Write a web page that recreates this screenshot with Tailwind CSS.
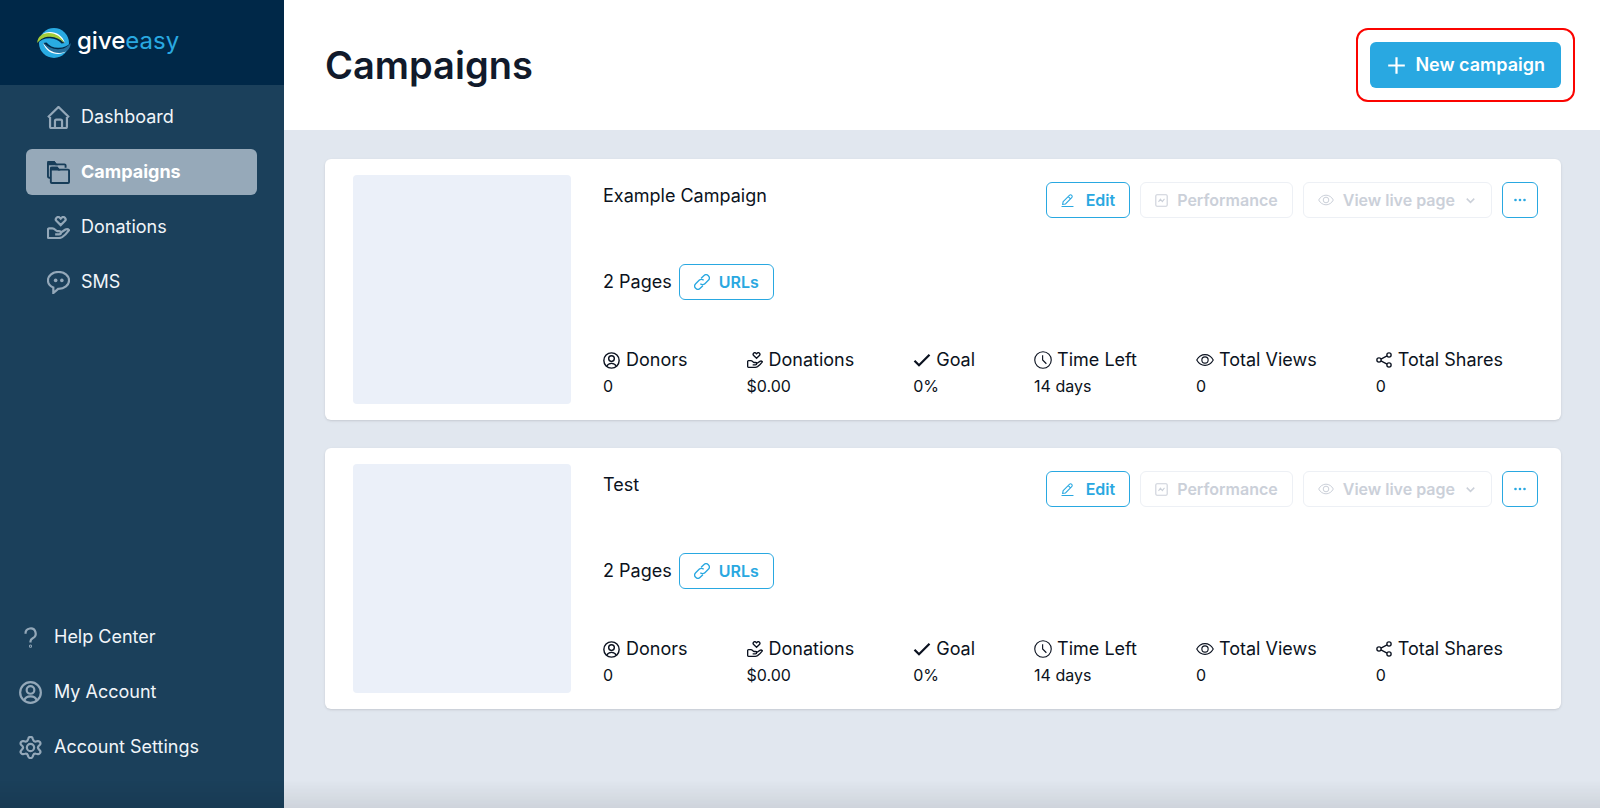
<!DOCTYPE html>
<html lang="en">
<head>
  <meta charset="UTF-8">
  <meta name="viewport" content="width=device-width, initial-scale=1">
  <title>Campaigns - GiveEasy</title>
  <script src="https://cdn.jsdelivr.net/npm/@tailwindcss/browser@4"></script>
</head>
<body class="flex min-h-screen bg-[#e1e7ef] font-['Inter',sans-serif] text-lg leading-6 text-[#0b1220]">

  <!-- Icons -->
  <svg class="hidden">
    <symbol id="home" viewBox="0 0 24 24"><path d="M3.2 11.5V21.6a1.4 1.4 0 0 0 1.4 1.4h14.8a1.4 1.4 0 0 0 1.4-1.4V11.5M1 11.8 12 1l11 10.8M8.3 22.8v-7a1.5 1.5 0 0 1 1.5-1.5h4.4a1.5 1.5 0 0 1 1.5 1.5v7"/></symbol>
    <symbol id="folders" viewBox="0 0 24 24"><path d="M4 17.5H2.2A1.2 1.2 0 0 1 1 16.3V2.2A1.2 1.2 0 0 1 2.2 1h5l2 2.5h9a1.2 1.2 0 0 1 1.2 1.2V7M4 22V8a1 1 0 0 1 1-1h5.500l1.500 2h10a1 1 0 0 1 1 1v12a1 1 0 0 1-1 1H5a1 1 0 0 1-1-1z"/><path fill="currentColor" d="M1.500 1h5.700l2 2.500H1.500zM4.500 7h6l1.500 2H4.500z"/></symbol>
    <symbol id="hand" viewBox="0 0 24 24"><path d="M14.300 9.500 10 5.300a2.400 2.400 0 0 1 3.400-3.500l.9.900.9-.9a2.400 2.400 0 0 1 3.400 3.500zM1 14.200v7.600a1.200 1.200 0 0 0 1.200 1.200h10.300c1.200 0 2.300-.4 3.300-1 2.800-1.800 5-4.300 7.200-7.300-1-1.200-2.500-1.300-3.700-.6l-4.700 3.100c-.3-1-1-1.500-2-1.500h-2c-1.500 0-2.300-2.700-5.100-2.700H2.200A1.200 1.200 0 0 0 1 14.200zM14.600 17.200c0 1.200-.9 2-2 2H8.500"/></symbol>
    <symbol id="chat" viewBox="0 0 24 24"><path d="M12 1C5.900 1 1 4.800 1 9.800c0 3.400 2.300 6 5.600 7.400V23l5-4.400H12c6.100 0 11-3.800 11-8.800S18.100 1 12 1z"/><g fill="#94a8b9" stroke="none"><circle cx="9" cy="9.800" r="1.900"/><circle cx="15.500" cy="9.800" r="1.900"/></g></symbol>
    <symbol id="question" viewBox="0 0 24 24"><path d="M6.800 8a5.300 5.300 0 1 1 7.500 4.700c-1.500.8-2.300 1.700-2.300 3.300v1.200"/><circle cx="12" cy="21" r=".5"/></symbol>
    <symbol id="user" viewBox="0 0 24 24"><circle cx="12" cy="12" r="10.800"/><circle cx="12" cy="9.300" r="4"/><path d="M5.300 20.300c1-2.800 3.700-4.300 6.700-4.300s5.700 1.500 6.700 4.300"/></symbol>
    <symbol id="cog" viewBox="0 0 24 24"><circle cx="12" cy="12" r="3.800"/><path d="m14.300 2.600.5 1.500a2.400 2.400 0 0 0 2.900 1.600l1.500-.3a2.400 2.400 0 0 1 2.400 4l-1.100 1.100a2.400 2.400 0 0 0 0 3.200l1.100 1.100a2.400 2.400 0 0 1-2.400 4l-1.500-.3a2.400 2.400 0 0 0-2.900 1.600l-.5 1.300a2.400 2.400 0 0 1-4.600 0l-.5-1.300a2.400 2.400 0 0 0-2.900-1.600l-1.500.3a2.400 2.400 0 0 1-2.400-4l1.100-1.200a2.400 2.400 0 0 0 0-3.200L2.400 9.400a2.400 2.400 0 0 1 2.400-4l1.500.3a2.400 2.400 0 0 0 2.900-1.600l.5-1.500a2.400 2.400 0 0 1 4.600 0z"/></symbol>
    <symbol id="plus" viewBox="0 0 24 24"><path d="M12 2.500v19M2.500 12h19"/></symbol>
    <symbol id="pencil" viewBox="0 0 24 24"><path d="M1 23h22M4 14 15.500 2.500a3 3 0 0 1 4.300 4.300L8.300 18.300 3 19zM13.500 5l4 4"/></symbol>
    <symbol id="chart" viewBox="0 0 24 24"><rect x="1.500" y="1.500" width="21" height="21" rx="2"/><path d="m6.500 14.500 3.500-5 3.500 4.500L17.500 9"/></symbol>
    <symbol id="eye" viewBox="0 0 24 24"><path d="M1 12c2.500-4.500 6.300-7.200 11-7.200S20.500 7.500 23 12c-2.500 4.500-6.300 7.200-11 7.200S3.500 16.500 1 12z"/><circle cx="12" cy="12" r="4.200"/></symbol>
    <symbol id="down" viewBox="0 0 24 24"><path d="m2 7 10 10L22 7"/></symbol>
    <symbol id="dots" viewBox="0 0 24 24"><g fill="currentColor" stroke="none"><circle cx="3" cy="12" r="2.600"/><circle cx="12" cy="12" r="2.600"/><circle cx="21" cy="12" r="2.600"/></g></symbol>
    <symbol id="link" viewBox="0 0 24 24"><path d="M9.500 14.500a4.800 4.800 0 0 0 6.800 0l5.200-5.200a4.800 4.800 0 0 0-6.800-6.800l-4 4M14.500 9.500a4.800 4.800 0 0 0-6.800 0l-5.200 5.200a4.800 4.800 0 0 0 6.800 6.800l4-4"/></symbol>
    <symbol id="check" viewBox="0 0 24 24"><path d="m2 13 6 6L22 5"/></symbol>
    <symbol id="clock" viewBox="0 0 24 24"><circle cx="12" cy="12" r="11"/><path d="M11.500 5.500V12l5 5"/></symbol>
    <symbol id="share" viewBox="0 0 24 24"><circle cx="4.500" cy="12" r="3.200"/><circle cx="19.500" cy="4.500" r="3.200"/><circle cx="19.500" cy="19.500" r="3.200"/><path d="m7.400 10.600 9.200-4.700M7.400 13.400l9.200 4.700"/></symbol>
  </svg>

  <!-- Sidebar -->
  <aside class="flex w-[284px] shrink-0 flex-col bg-[#1b405b] text-slate-100">
    <a href="#" class="flex h-[85px] items-center gap-[5px] bg-[#002848] pl-9" aria-label="giveeasy">
      <svg class="size-9" viewBox="0 0 36 36" fill="none">
        <circle cx="18" cy="18" r="15" fill="#29abe2"/>
        <g>
          <path d="M1 18.500C5 14.500 9 13 14 13.200c5 .2 8.500 1.800 11.500 5.300l3.500-.5C25 13 20 9 13 9 7 9 2 12 1 18.500z" fill="#002848"/>
          <path d="M6 9.500C13 4.500 26 7 29 18.500 25 12 19 9 13 9z" fill="#fff"/>
          <path d="M1.200 18C1.500 11.500 6.500 7.800 13 8c7 .3 12.500 4 15 10-4-4-8.500-6-13.500-6.200C9 11.600 5 13.500 1.200 18z" fill="#a4cd39"/>
        </g>
        <g transform="rotate(180 18 18)">
          <path d="M1 18.500C5 14.500 9 13 14 13.200c5 .2 8.500 1.800 11.500 5.300l3.500-.5C25 13 20 9 13 9 7 9 2 12 1 18.500z" fill="#002848"/>
          <path d="M6 9.500C13 4.500 26 7 29 18.500 25 12 19 9 13 9z" fill="#fff"/>
          <path d="M1.200 18C1.500 11.500 6.500 7.800 13 8c7 .3 12.500 4 15 10-4-4-8.500-6-13.500-6.200C9 11.600 5 13.500 1.200 18z" fill="#256f9c"/>
        </g>
      </svg>
      <span class="pb-1 text-2xl leading-8 font-medium text-white">give<span class="font-normal text-[#29a9e1]">easy</span></span>
    </a>
    <nav class="flex flex-col gap-[9px] pt-[9px] pr-[27px] pl-[26px]">
      <a href="#" class="flex h-[46px] items-center gap-[11px] rounded-md px-[21px]">
        <svg class="size-[23px] fill-none stroke-[#94a8b9] stroke-[2.3]"><use href="#home"/></svg>Dashboard
      </a>
      <a href="#" class="flex h-[46px] items-center gap-[11px] rounded-md bg-[#96a9b9] px-[21px] font-bold text-white">
        <svg class="size-[23px] fill-none stroke-[#173d59] stroke-2 text-[#173d59]"><use href="#folders"/></svg>Campaigns
      </a>
      <a href="#" class="flex h-[46px] items-center gap-[11px] rounded-md px-[21px]">
        <svg class="size-[23px] fill-none stroke-[#94a8b9] stroke-[2.3]"><use href="#hand"/></svg>Donations
      </a>
      <a href="#" class="flex h-[46px] items-center gap-[11px] rounded-md px-[21px]">
        <svg class="size-[23px] fill-none stroke-[#94a8b9] stroke-[2.3]"><use href="#chat"/></svg>SMS
      </a>
    </nav>
    <nav class="mt-auto flex flex-col gap-[9px] pb-[38px] pl-[19px]">
      <a href="#" class="flex h-[46px] items-center gap-3">
        <svg class="size-[23px] fill-none stroke-[#94a8b9] stroke-[2.3]"><use href="#question"/></svg>Help Center
      </a>
      <a href="#" class="flex h-[46px] items-center gap-3">
        <svg class="size-[23px] fill-none stroke-[#94a8b9] stroke-[2.3]"><use href="#user"/></svg>My Account
      </a>
      <a href="#" class="flex h-[46px] items-center gap-3">
        <svg class="size-[23px] fill-none stroke-[#94a8b9] stroke-[2.3]"><use href="#cog"/></svg>Account Settings
      </a>
    </nav>
  </aside>

  <main class="min-w-0 flex-1">
    <!-- Header -->
    <header class="flex h-[130px] items-center justify-between bg-white pr-[39px] pl-[41px]">
      <h1 class="text-[38px] leading-12 font-semibold text-[#111a2b]">Campaigns</h1>
      <div class="relative">
        <button class="flex h-[46px] items-center gap-2 rounded-md bg-[#29a8e1] px-4 font-semibold text-white">
          <svg class="size-[21px] fill-none stroke-white stroke-[2.5]"><use href="#plus"/></svg>New campaign
        </button>
        <div class="pointer-events-none absolute -inset-[14px] rounded-xl border-2 border-[#fb0400]"></div>
      </div>
    </header>

    <!-- Campaign list -->
    <div class="flex flex-col gap-7 pt-[29px] pr-[39px] pb-10 pl-[41px]">
      <article class="flex gap-8 rounded-md bg-white px-7 py-4 shadow">
        <div class="h-[229px] w-[218px] shrink-0 rounded-sm bg-[#ebf0f9]"></div>
        <div class="flex min-w-0 flex-1 flex-col justify-between">
          <div class="-mr-[5px] flex items-start justify-between">
            <h2 class="pt-[9px]">Example Campaign</h2>
            <div class="flex gap-[10px] pt-[7px] text-base font-semibold">
              <button class="flex h-9 items-center gap-3 rounded-md border border-[#29a8e1] px-[14px] text-[#29a8e1]">
                <svg class="size-[13px] fill-none stroke-current stroke-2"><use href="#pencil"/></svg>Edit
              </button>
              <button class="flex h-9 items-center gap-[9px] rounded-md border border-[#edf0f5] px-[14px] text-[#cbd0d9]" disabled>
                <svg class="size-[13px] fill-none stroke-current stroke-2"><use href="#chart"/></svg>Performance
              </button>
              <button class="flex h-9 items-center gap-[9px] rounded-md border border-[#edf0f5] px-[14px] text-[#cbd0d9]" disabled>
                <svg class="size-4 fill-none stroke-current stroke-[1.5]"><use href="#eye"/></svg>View live page
                <svg class="mx-[2px] size-[9px] fill-none stroke-current stroke-4"><use href="#down"/></svg>
              </button>
              <button class="flex size-9 items-center justify-center rounded-md border border-[#29a8e1] text-[#29a8e1]" aria-label="More actions">
                <svg class="size-3"><use href="#dots"/></svg>
              </button>
            </div>
          </div>
          <div class="flex items-center gap-[7px] pb-[2px]">
            <span>2 Pages</span>
            <button class="flex h-9 items-center gap-[9px] rounded-md border border-[#29a8e1] px-[14px] text-base font-semibold text-[#29a8e1]">
              <svg class="size-4 fill-none stroke-current stroke-2"><use href="#link"/></svg>URLs
            </button>
          </div>
          <dl class="flex gap-[59px] pb-[6px]">
            <div>
              <dt class="flex items-center gap-[6px]"><svg class="size-[17px] fill-none stroke-current stroke-2"><use href="#user"/></svg>Donors</dt>
              <dd class="pt-0.5 text-base">0</dd>
            </div>
            <div>
              <dt class="flex items-center gap-[6px]"><svg class="size-4 fill-none stroke-current stroke-2"><use href="#hand"/></svg>Donations</dt>
              <dd class="pt-0.5 text-base">$0.00</dd>
            </div>
            <div>
              <dt class="flex items-center gap-[5px]"><svg class="size-[18px] fill-none stroke-current stroke-3"><use href="#check"/></svg>Goal</dt>
              <dd class="pt-0.5 text-base">0%</dd>
            </div>
            <div>
              <dt class="flex items-center gap-[5px]"><svg class="size-[18px] fill-none stroke-current stroke-[1.5]"><use href="#clock"/></svg>Time Left</dt>
              <dd class="pt-0.5 text-base">14 days</dd>
            </div>
            <div>
              <dt class="flex items-center gap-[5px]"><svg class="size-[18px] fill-none stroke-current stroke-[1.5]"><use href="#eye"/></svg>Total Views</dt>
              <dd class="pt-0.5 text-base">0</dd>
            </div>
            <div>
              <dt class="flex items-center gap-[6px]"><svg class="size-4 fill-none stroke-current stroke-2"><use href="#share"/></svg>Total Shares</dt>
              <dd class="pt-0.5 text-base">0</dd>
            </div>
          </dl>
        </div>
      </article>

      <article class="flex gap-8 rounded-md bg-white px-7 py-4 shadow">
        <div class="h-[229px] w-[218px] shrink-0 rounded-sm bg-[#ebf0f9]"></div>
        <div class="flex min-w-0 flex-1 flex-col justify-between">
          <div class="-mr-[5px] flex items-start justify-between">
            <h2 class="pt-[9px]">Test</h2>
            <div class="flex gap-[10px] pt-[7px] text-base font-semibold">
              <button class="flex h-9 items-center gap-3 rounded-md border border-[#29a8e1] px-[14px] text-[#29a8e1]">
                <svg class="size-[13px] fill-none stroke-current stroke-2"><use href="#pencil"/></svg>Edit
              </button>
              <button class="flex h-9 items-center gap-[9px] rounded-md border border-[#edf0f5] px-[14px] text-[#cbd0d9]" disabled>
                <svg class="size-[13px] fill-none stroke-current stroke-2"><use href="#chart"/></svg>Performance
              </button>
              <button class="flex h-9 items-center gap-[9px] rounded-md border border-[#edf0f5] px-[14px] text-[#cbd0d9]" disabled>
                <svg class="size-4 fill-none stroke-current stroke-[1.5]"><use href="#eye"/></svg>View live page
                <svg class="mx-[2px] size-[9px] fill-none stroke-current stroke-4"><use href="#down"/></svg>
              </button>
              <button class="flex size-9 items-center justify-center rounded-md border border-[#29a8e1] text-[#29a8e1]" aria-label="More actions">
                <svg class="size-3"><use href="#dots"/></svg>
              </button>
            </div>
          </div>
          <div class="flex items-center gap-[7px] pb-[2px]">
            <span>2 Pages</span>
            <button class="flex h-9 items-center gap-[9px] rounded-md border border-[#29a8e1] px-[14px] text-base font-semibold text-[#29a8e1]">
              <svg class="size-4 fill-none stroke-current stroke-2"><use href="#link"/></svg>URLs
            </button>
          </div>
          <dl class="flex gap-[59px] pb-[6px]">
            <div>
              <dt class="flex items-center gap-[6px]"><svg class="size-[17px] fill-none stroke-current stroke-2"><use href="#user"/></svg>Donors</dt>
              <dd class="pt-0.5 text-base">0</dd>
            </div>
            <div>
              <dt class="flex items-center gap-[6px]"><svg class="size-4 fill-none stroke-current stroke-2"><use href="#hand"/></svg>Donations</dt>
              <dd class="pt-0.5 text-base">$0.00</dd>
            </div>
            <div>
              <dt class="flex items-center gap-[5px]"><svg class="size-[18px] fill-none stroke-current stroke-3"><use href="#check"/></svg>Goal</dt>
              <dd class="pt-0.5 text-base">0%</dd>
            </div>
            <div>
              <dt class="flex items-center gap-[5px]"><svg class="size-[18px] fill-none stroke-current stroke-[1.5]"><use href="#clock"/></svg>Time Left</dt>
              <dd class="pt-0.5 text-base">14 days</dd>
            </div>
            <div>
              <dt class="flex items-center gap-[5px]"><svg class="size-[18px] fill-none stroke-current stroke-[1.5]"><use href="#eye"/></svg>Total Views</dt>
              <dd class="pt-0.5 text-base">0</dd>
            </div>
            <div>
              <dt class="flex items-center gap-[6px]"><svg class="size-4 fill-none stroke-current stroke-2"><use href="#share"/></svg>Total Shares</dt>
              <dd class="pt-0.5 text-base">0</dd>
            </div>
          </dl>
        </div>
      </article>
    </div>
  </main>

  <!-- Bottom shade -->
  <div class="pointer-events-none fixed inset-x-0 bottom-0 h-7 bg-linear-to-t from-black/8 to-transparent"></div>
</body>
</html>
